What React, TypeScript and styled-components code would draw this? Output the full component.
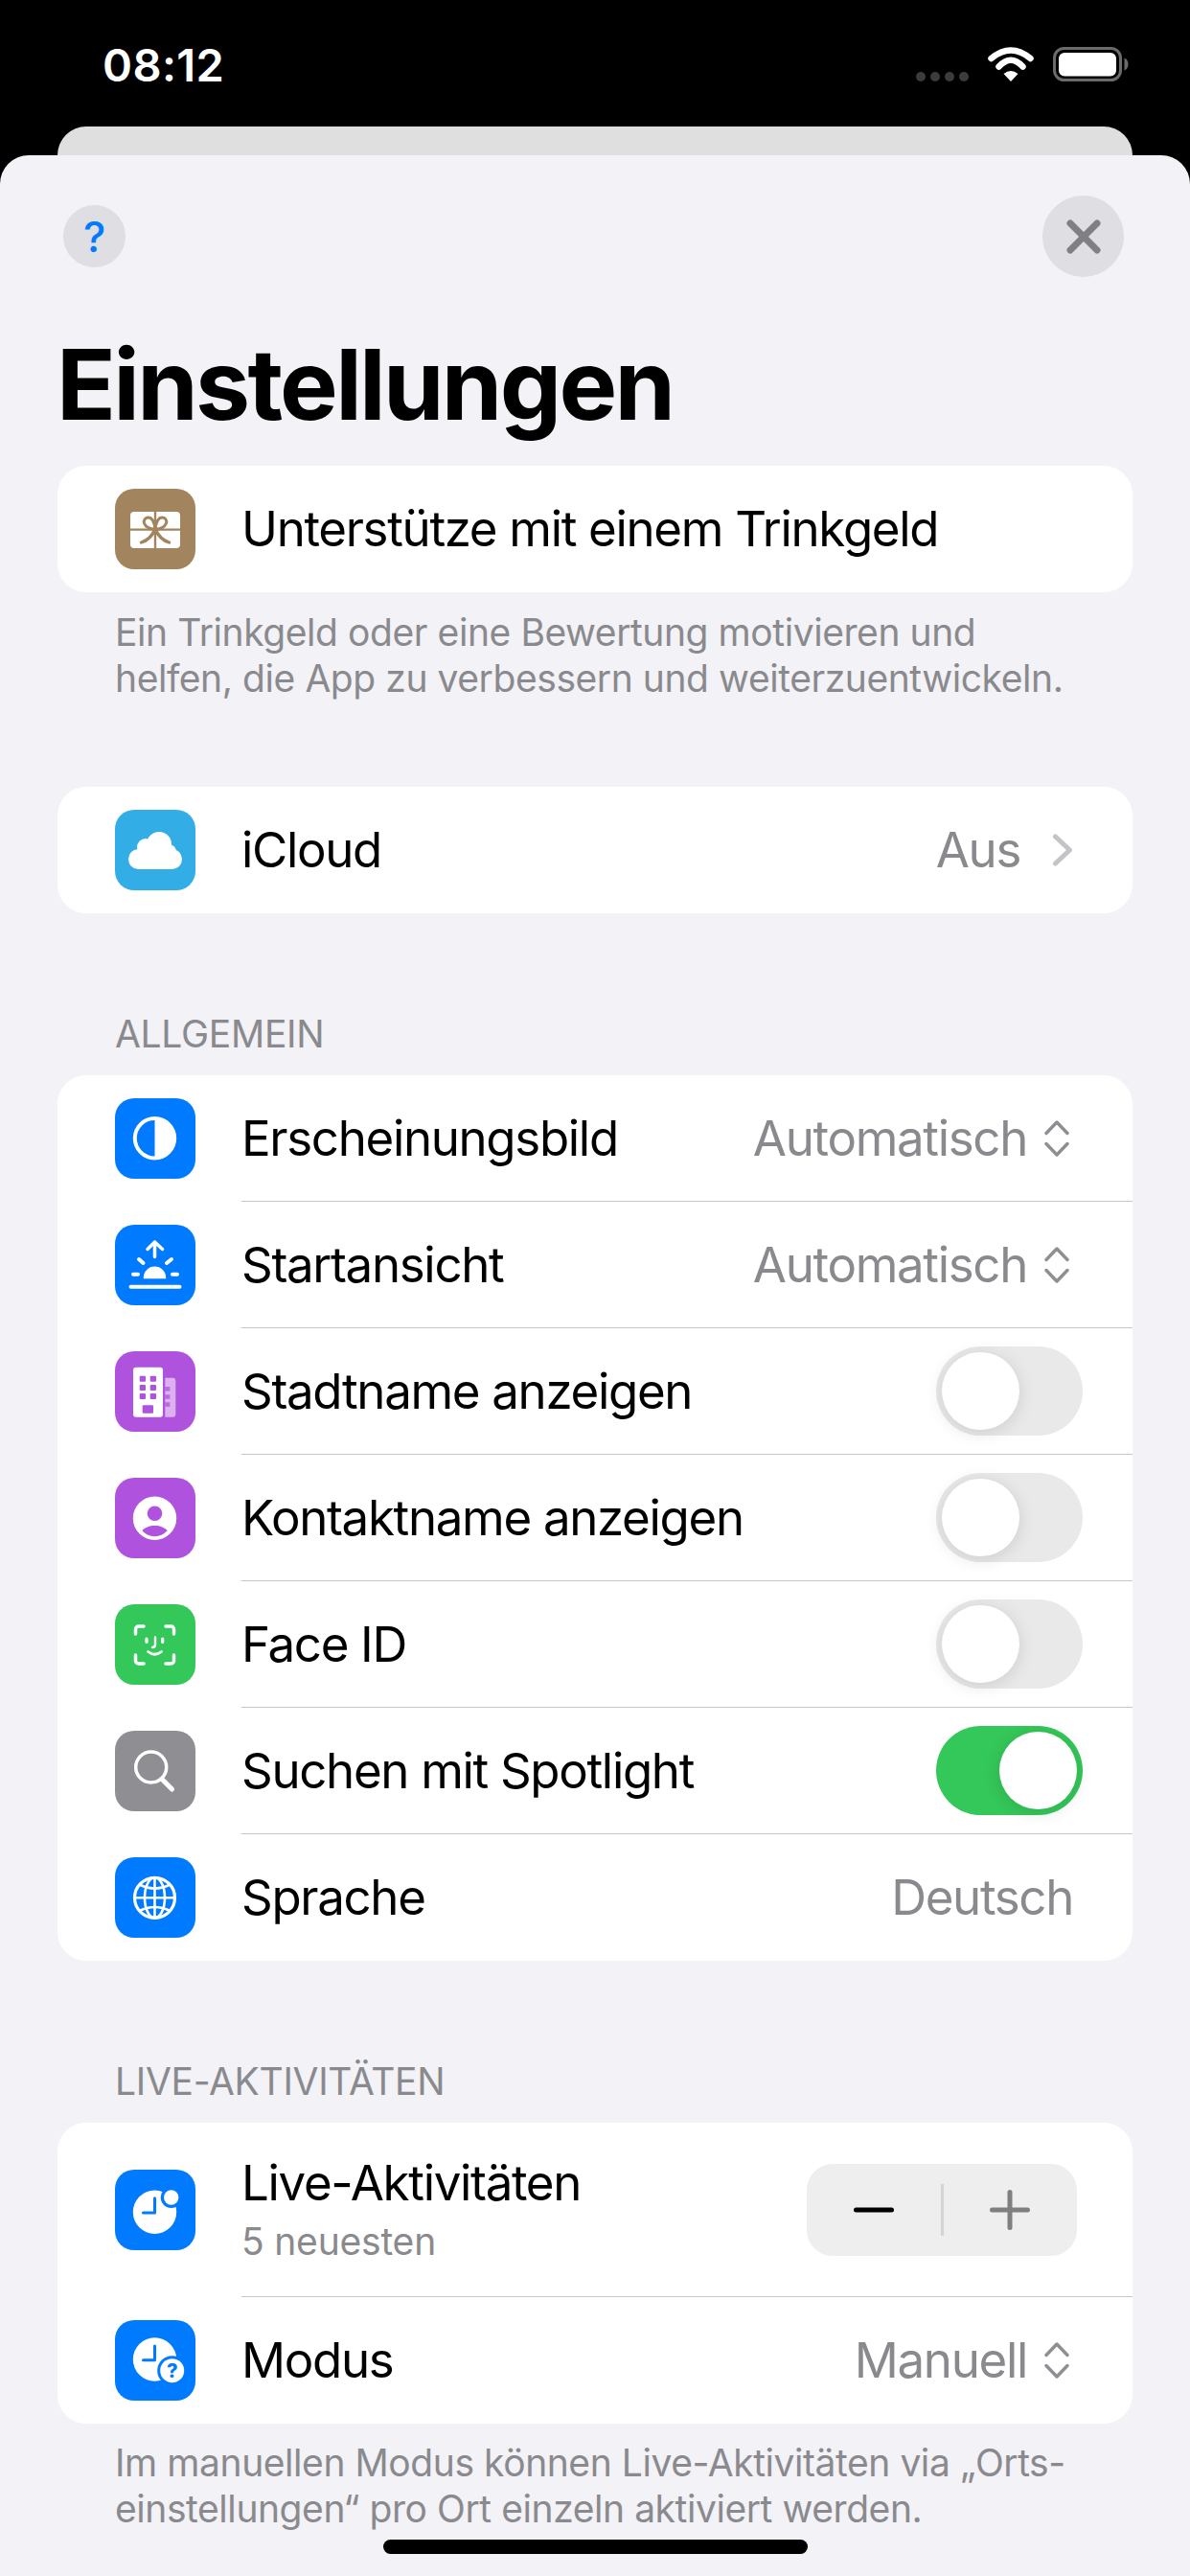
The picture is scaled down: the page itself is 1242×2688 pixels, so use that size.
import React from "react";
import styled, { createGlobalStyle } from "styled-components";

const Global = createGlobalStyle`
  html, body { margin: 0; padding: 0; background: #000; }
  body { width: 1242px; height: 2688px; overflow: hidden; font-family: Inter, "Liberation Sans", sans-serif; -webkit-font-smoothing: antialiased; }
  * { box-sizing: border-box; }
`;

const Screen = styled.div`
  width: 1242px;
  height: 2688px;
  background: #000;
  display: flex;
  flex-direction: column;
`;
const StatusBar = styled.div`
  height: 132px;
  flex: none;
  display: flex;
  align-items: flex-start;
  padding: 49px 64px 0 107px;
`;
const Time = styled.div`
  color: #fff;
  font-size: 47px;
  line-height: 38px;
  font-weight: 600;
  letter-spacing: 0.4px;
`;
const StatusIcons = styled.div`
  margin-left: auto;
  display: flex;
  align-items: flex-start;
`;
const SignalDots = styled.div`
  display: flex;
  gap: 5px;
  margin: 26px 20px 0 0;
`;
const SignalDot = styled.span`
  width: 10px;
  height: 10px;
  border-radius: 50%;
  background: #3c3c3c;
`;
const WifiIcon = styled.svg`
  width: 48px;
  height: 36px;
  margin-right: 20px;
`;
const BatteryIcon = styled.svg`
  width: 79px;
  height: 36px;
`;
const BackSheet = styled.div`
  height: 30px;
  flex: none;
  margin: 0 60px;
  background: #dfdfdf;
  border-radius: 30px 30px 0 0;
`;
const Sheet = styled.div`
  flex: 1;
  background: #f2f2f7;
  border-radius: 30px 30px 0 0;
  display: flex;
  flex-direction: column;
  padding: 0 60px;
`;
const NavRow = styled.div`
  height: 85px;
  margin-top: 42px;
  flex: none;
  display: flex;
  align-items: center;
  justify-content: space-between;
  padding: 0 9px 0 6px;
`;
const HelpButton = styled.div`
  width: 65px;
  height: 65px;
  border-radius: 50%;
  background: #dedee3;
  color: #007aff;
  font-size: 44px;
  font-weight: 500;
  display: flex;
  align-items: center;
  justify-content: center;
`;
const CloseButton = styled.div`
  width: 85px;
  height: 85px;
  border-radius: 50%;
  background: #dedee3;
  display: flex;
  align-items: center;
  justify-content: center;
`;
const Title = styled.h1`
  margin: 52px 0 25px -1px;
  font-size: 102px;
  line-height: 120px;
  font-weight: 700;
  letter-spacing: -2.7px;
  color: #000;
`;
const Card = styled.div`
  background: #fff;
  border-radius: 30px;
  overflow: hidden;
`;
const Row = styled.div<{ $tall?: boolean }>`
  height: ${(p) => (p.$tall ? 182 : 132)}px;
  display: flex;
  align-items: stretch;
  padding-left: 60px;
`;
const IconTile = styled.div<{ $bg: string }>`
  width: 84px;
  height: 84px;
  flex: none;
  align-self: center;
  border-radius: 20px;
  background: ${(p) => p.$bg};
  margin-right: 48px;
  svg {
    display: block;
    width: 84px;
    height: 84px;
  }
`;
const RowBody = styled.div<{ $last?: boolean }>`
  flex: 1;
  min-width: 0;
  display: flex;
  align-items: center;
  padding-right: 62px;
  border-bottom: ${(p) => (p.$last ? "none" : "1px solid #c6c6c8")};
`;
const Label = styled.div`
  font-size: 51px;
  line-height: 60px;
  letter-spacing: -1.32px;
  color: #000;
  flex: 1;
  white-space: nowrap;
`;
const LabelStack = styled.div`
  flex: 1;
  display: flex;
  flex-direction: column;
  gap: 7px;
`;
const SubLabel = styled.div`
  font-size: 39px;
  line-height: 48px;
  color: #8a8a8e;
  letter-spacing: -0.2px;
`;
const Value = styled.div`
  font-size: 51px;
  line-height: 60px;
  letter-spacing: -1.32px;
  color: #8a8a8e;
  white-space: nowrap;
`;
const UpDownIcon = styled.svg`
  width: 26px;
  height: 38px;
  margin: 0 4px 0 18px;
  flex: none;
`;
const DisclosureIcon = styled.svg`
  width: 22px;
  height: 34px;
  margin: 0 0 0 33px;
  flex: none;
`;
const Footer = styled.p<{ $after: number }>`
  margin: ${(p) => p.$after}px 0 0;
  padding: 0 60px;
  font-size: 39px;
  line-height: 48px;
  color: #8a8a8e;
  letter-spacing: -0.43px;
  white-space: pre;
`;
const SectionHeader = styled.div<{ $before: number }>`
  margin: ${(p) => p.$before}px 0 19px;
  padding: 0 60px;
  font-size: 39px;
  line-height: 48px;
  color: #8a8a8e;
  letter-spacing: -0.3px;
`;
const SectionGap = styled.div`
  height: 89px;
  flex: none;
`;
const Track = styled.div<{ $on?: boolean }>`
  width: 153px;
  height: 93px;
  margin-right: -10px;
  flex: none;
  border-radius: 47px;
  padding: 6px;
  display: flex;
  justify-content: ${(p) => (p.$on ? "flex-end" : "flex-start")};
  background: ${(p) => (p.$on ? "#34c759" : "#e9e9ea")};
`;
const Knob = styled.div`
  width: 81px;
  height: 81px;
  border-radius: 50%;
  background: #fff;
  box-shadow: 0 3px 18px rgba(0, 0, 0, 0.12);
`;
const Stepper = styled.div`
  width: 282px;
  height: 96px;
  margin-right: -4px;
  flex: none;
  border-radius: 27px;
  background: #eeeeef;
  display: flex;
  align-items: center;
`;
const StepButton = styled.div`
  flex: 1;
  display: flex;
  align-items: center;
  justify-content: center;
  svg {
    display: block;
    width: 42px;
    height: 42px;
  }
`;
const StepDivider = styled.div`
  width: 3px;
  height: 54px;
  background: #d4d4d6;
  flex: none;
`;
const HomeBar = styled.div`
  width: 443px;
  height: 15px;
  border-radius: 8px;
  background: #000;
  margin: 8px auto 0;
  flex: none;
`;

const BLUE = "#007aff";
const PURPLE = "#af52de";

const GiftGlyph = () => (
  <svg viewBox="0 0 84 84">
    <rect x="16" y="24" width="52" height="38" rx="4" fill="#fff" />
    <g fill="none" stroke="#a2845e" strokeWidth="3" strokeLinecap="round" strokeLinejoin="round">
      <path d="M42 24v38M16 42.6h52" strokeLinecap="butt" strokeWidth="2.4" />
      <path d="M42 42c-5 .5-10-2-11.500-6-1-3 1-6 4.500-6 4 0 6 5 7 12zM42 42c5 .5 10-2 11.500-6 1-3-1-6-4.500-6-4 0-6 5-7 12z" />
      <path d="M42 42c-3 7-8 12-14.500 14M42 42c3 7 8 12 14.500 14" strokeWidth="3.400" />
    </g>
  </svg>
);
const CloudGlyph = () => (
  <svg viewBox="0 0 84 84" fill="#fff">
    <circle cx="24.500" cy="51.500" r="10.500" />
    <circle cx="32" cy="39" r="9" />
    <circle cx="46" cy="36" r="13" />
    <circle cx="59.500" cy="51.500" r="10.500" />
    <circle cx="56" cy="44" r="8" />
    <rect x="24" y="40" width="36" height="22" />
  </svg>
);
const AppearanceGlyph = () => (
  <svg viewBox="0 0 84 84">
    <circle cx="41.500" cy="41.700" r="20.700" fill="none" stroke="#fff" strokeWidth="4" />
    <path d="M41.500 21a20.700 20.700 0 0 1 0 41.400z" fill="#fff" />
  </svg>
);
const SunriseGlyph = () => (
  <svg viewBox="0 0 84 84" fill="none" stroke="#fff" strokeLinecap="round" strokeLinejoin="round">
    <path d="M41.500 33.500V18M34 25.500l7.500-7.500 8 7.500" strokeWidth="3.500" />
    <path d="M25 36l4.500 4M59 36l-5 4M19 51.700h5M60 51.700h5" strokeWidth="4" />
    <path d="M16.500 64.700h51" strokeWidth="4" />
    <path d="M29.800 56.300v-1a11.700 11.700 0 0 1 23.400 0v1z" fill="#fff" stroke="none" />
  </svg>
);
const BuildingGlyph = () => (
  <svg viewBox="0 0 84 84">
    <rect x="19" y="16.700" width="31" height="52" rx="3" fill="#fff" />
    <g fill={PURPLE}>
      <rect x="25.700" y="25.700" width="6.300" height="6" rx="1" />
      <rect x="36.700" y="25.700" width="6.300" height="6" rx="1" />
      <rect x="25.700" y="35" width="6.300" height="6" rx="1" />
      <rect x="36.700" y="35" width="6.300" height="6" rx="1" />
      <rect x="25.700" y="44" width="6.300" height="6" rx="1" />
      <rect x="36.700" y="44" width="6.300" height="6" rx="1" />
      <rect x="28.700" y="56.300" width="11.300" height="8.400" rx="1" />
    </g>
    <path d="M52.300 27.700h8a3 3 0 0 1 3 3V65.700a3 3 0 0 1-3 3h-8z" fill="#fff" opacity=".55" />
    <g fill={PURPLE} opacity=".75">
      <rect x="52.300" y="37" width="5" height="4.500" />
      <rect x="52.300" y="45.300" width="5" height="4.500" />
      <rect x="52.300" y="53.300" width="5" height="4.500" />
    </g>
  </svg>
);
const PersonGlyph = () => (
  <svg viewBox="0 0 84 84">
    <circle cx="41.500" cy="42.300" r="22.700" fill="#fff" />
    <circle cx="41.500" cy="37.300" r="7.800" fill={PURPLE} />
    <path d="M28.300 55.300C31 52 36 50 41.500 50S52 52 54.700 55.300C51 59 46.500 61.300 41.500 61.300S32 59 28.300 55.300z" fill={PURPLE} />
  </svg>
);
const FaceGlyph = () => (
  <svg viewBox="0 0 84 84" fill="none" stroke="#fff" strokeLinecap="round" strokeLinejoin="round">
    <path d="M21.500 31v-5a3 3 0 0 1 3-3H30M53 23h5.500a3 3 0 0 1 3 3v5M61.500 53v6a3 3 0 0 1-3 3H53M30 62h-5.500a3 3 0 0 1-3-3v-6" strokeWidth="3.500" />
    <path d="M33 36v3.500M49.700 36v3.500" strokeWidth="3.200" />
    <path d="M42 34.500v7.500q0 3-3 3" strokeWidth="2.400" />
    <path d="M34.500 49.500q7 5.500 14 0" strokeWidth="2.800" />
  </svg>
);
const SearchGlyph = () => (
  <svg viewBox="0 0 84 84" fill="none" stroke="#fff" strokeLinecap="round">
    <circle cx="37.700" cy="38" r="16" strokeWidth="3.500" />
    <path d="M49 50.500l10.500 10.500" strokeWidth="5" />
  </svg>
);
const GlobeGlyph = () => (
  <svg viewBox="0 0 84 84" fill="none" stroke="#fff" strokeWidth="2.600">
    <circle cx="41.500" cy="42.300" r="21" strokeWidth="3.200" />
    <ellipse cx="41.500" cy="42.300" rx="10.500" ry="21" />
    <path d="M41.500 21v42.600M20.500 42.300h42" />
    <path d="M25.500 28.500q16 8 32 0M25.500 56q16-8 32 0" />
  </svg>
);
const ClockDotGlyph = () => (
  <svg viewBox="0 0 84 84">
    <circle cx="41.500" cy="44.300" r="22.700" fill="#fff" />
    <path d="M41.500 29.700V45H29.500" fill="none" stroke={BLUE} strokeWidth="3" strokeLinecap="round" strokeLinejoin="round" />
    <circle cx="58.700" cy="29" r="11" fill={BLUE} />
    <circle cx="58.700" cy="29" r="7.700" fill="#fff" />
  </svg>
);
const ClockQuestionGlyph = () => (
  <svg viewBox="0 0 84 84">
    <circle cx="41.500" cy="41" r="22.700" fill="#fff" />
    <path d="M41.500 27V41.700H29.500" fill="none" stroke={BLUE} strokeWidth="3" strokeLinecap="round" strokeLinejoin="round" />
    <circle cx="59.700" cy="52.700" r="15.500" fill={BLUE} />
    <circle cx="59.700" cy="52.700" r="12.500" fill="#fff" />
    <text x="59.700" y="60" textAnchor="middle" fontSize="20" fontWeight="800" fill={BLUE} fontFamily="Inter, sans-serif">?</text>
  </svg>
);

const UpDown = () => (
  <UpDownIcon viewBox="0 0 26 38" fill="none" stroke="#8e8e93" strokeWidth="3.400" strokeLinecap="round" strokeLinejoin="round">
    <path d="M2 13.500L13 2l11 11.500M2 24.500L13 36l11-11.500" />
  </UpDownIcon>
);
const Switch = ({ on }: { on?: boolean }) => (
  <Track $on={on}>
    <Knob />
  </Track>
);

type RowProps = { bg: string; glyph: React.ReactNode; last?: boolean; children: React.ReactNode };
const SettingRow = ({ bg, glyph, last, children }: RowProps) => (
  <Row>
    <IconTile $bg={bg}>{glyph}</IconTile>
    <RowBody $last={last}>{children}</RowBody>
  </Row>
);

export default function App() {
  return (
    <Screen>
      <Global />
      <StatusBar>
        <Time>08:12</Time>
        <StatusIcons>
          <SignalDots>
            <SignalDot />
            <SignalDot />
            <SignalDot />
            <SignalDot />
          </SignalDots>
          <WifiIcon viewBox="0 0 48 36" fill="none">
            <path d="M3.500 12Q24-5 44.500 12" stroke="#fff" strokeWidth="6.500" strokeLinecap="round" />
            <path d="M11.500 20.500Q24 7 36.500 20.500" stroke="#fff" strokeWidth="6.500" strokeLinecap="round" />
            <path d="M24 36L16.500 28Q24 22 31.500 28Z" fill="#fff" />
          </WifiIcon>
          <BatteryIcon viewBox="0 0 79 36">
            <rect x="1.500" y="1.500" width="69" height="33" rx="10" fill="none" stroke="#6b6b6b" strokeWidth="3" />
            <rect x="6" y="6" width="60" height="24.500" rx="6" fill="#fff" />
            <path d="M74.500 11.500c2.500.8 4 3.500 4 6.500s-1.500 5.700-4 6.500z" fill="#6b6b6b" />
          </BatteryIcon>
        </StatusIcons>
      </StatusBar>
      <BackSheet />
      <Sheet>
        <NavRow>
          <HelpButton>?</HelpButton>
          <CloseButton>
            <svg width="36" height="36" viewBox="0 0 36 36" fill="none" stroke="#7f7f84" strokeWidth="7" strokeLinecap="round">
              <path d="M4 4l28 28M32 4L4 32" />
            </svg>
          </CloseButton>
        </NavRow>
        <Title>Einstellungen</Title>

        <Card>
          <SettingRow bg="#a2845e" glyph={<GiftGlyph />} last>
            <Label>Unterstütze mit einem Trinkgeld</Label>
          </SettingRow>
        </Card>
        <Footer $after={18}>
          {"Ein Trinkgeld oder eine Bewertung motivieren und\nhelfen, die App zu verbessern und weiterzuentwickeln."}
        </Footer>

        <SectionGap />
        <Card>
          <SettingRow bg="#32ade6" glyph={<CloudGlyph />} last>
            <Label>iCloud</Label>
            <Value>Aus</Value>
            <DisclosureIcon viewBox="0 0 22 34" fill="none" stroke="#c4c4c7" strokeWidth="5" strokeLinecap="round" strokeLinejoin="round">
              <path d="M3.500 3L18.500 17L3.500 31" />
            </DisclosureIcon>
          </SettingRow>
        </Card>

        <SectionHeader $before={102}>ALLGEMEIN</SectionHeader>
        <Card>
          <SettingRow bg={BLUE} glyph={<AppearanceGlyph />}>
            <Label>Erscheinungsbild</Label>
            <Value>Automatisch</Value>
            <UpDown />
          </SettingRow>
          <SettingRow bg={BLUE} glyph={<SunriseGlyph />}>
            <Label>Startansicht</Label>
            <Value>Automatisch</Value>
            <UpDown />
          </SettingRow>
          <SettingRow bg={PURPLE} glyph={<BuildingGlyph />}>
            <Label>Stadtname anzeigen</Label>
            <Switch />
          </SettingRow>
          <SettingRow bg={PURPLE} glyph={<PersonGlyph />}>
            <Label>Kontaktname anzeigen</Label>
            <Switch />
          </SettingRow>
          <SettingRow bg="#34c759" glyph={<FaceGlyph />}>
            <Label>Face ID</Label>
            <Switch />
          </SettingRow>
          <SettingRow bg="#8e8e93" glyph={<SearchGlyph />}>
            <Label>Suchen mit Spotlight</Label>
            <Switch on />
          </SettingRow>
          <SettingRow bg={BLUE} glyph={<GlobeGlyph />} last>
            <Label>Sprache</Label>
            <Value>Deutsch</Value>
          </SettingRow>
        </Card>

        <SectionHeader $before={102}>LIVE-AKTIVITÄTEN</SectionHeader>
        <Card>
          <Row $tall>
            <IconTile $bg={BLUE}>
              <ClockDotGlyph />
            </IconTile>
            <RowBody>
              <LabelStack>
                <Label>Live-Aktivitäten</Label>
                <SubLabel>5 neuesten</SubLabel>
              </LabelStack>
              <Stepper>
                <StepButton>
                  <svg viewBox="0 0 42 42" fill="none" stroke="#000" strokeWidth="5" strokeLinecap="round">
                    <path d="M2.500 21h37" />
                  </svg>
                </StepButton>
                <StepDivider />
                <StepButton>
                  <svg viewBox="0 0 42 42" fill="none" stroke="#7f7f7f" strokeWidth="5" strokeLinecap="round">
                    <path d="M2.500 21h37M21 2.500v37" />
                  </svg>
                </StepButton>
              </Stepper>
            </RowBody>
          </Row>
          <SettingRow bg={BLUE} glyph={<ClockQuestionGlyph />} last>
            <Label>Modus</Label>
            <Value>Manuell</Value>
            <UpDown />
          </SettingRow>
        </Card>
        <Footer $after={17}>
          {"Im manuellen Modus können Live-Aktivitäten via „Orts-\neinstellungen“ pro Ort einzeln aktiviert werden."}
        </Footer>
        <HomeBar />
      </Sheet>
    </Screen>
  );
}
